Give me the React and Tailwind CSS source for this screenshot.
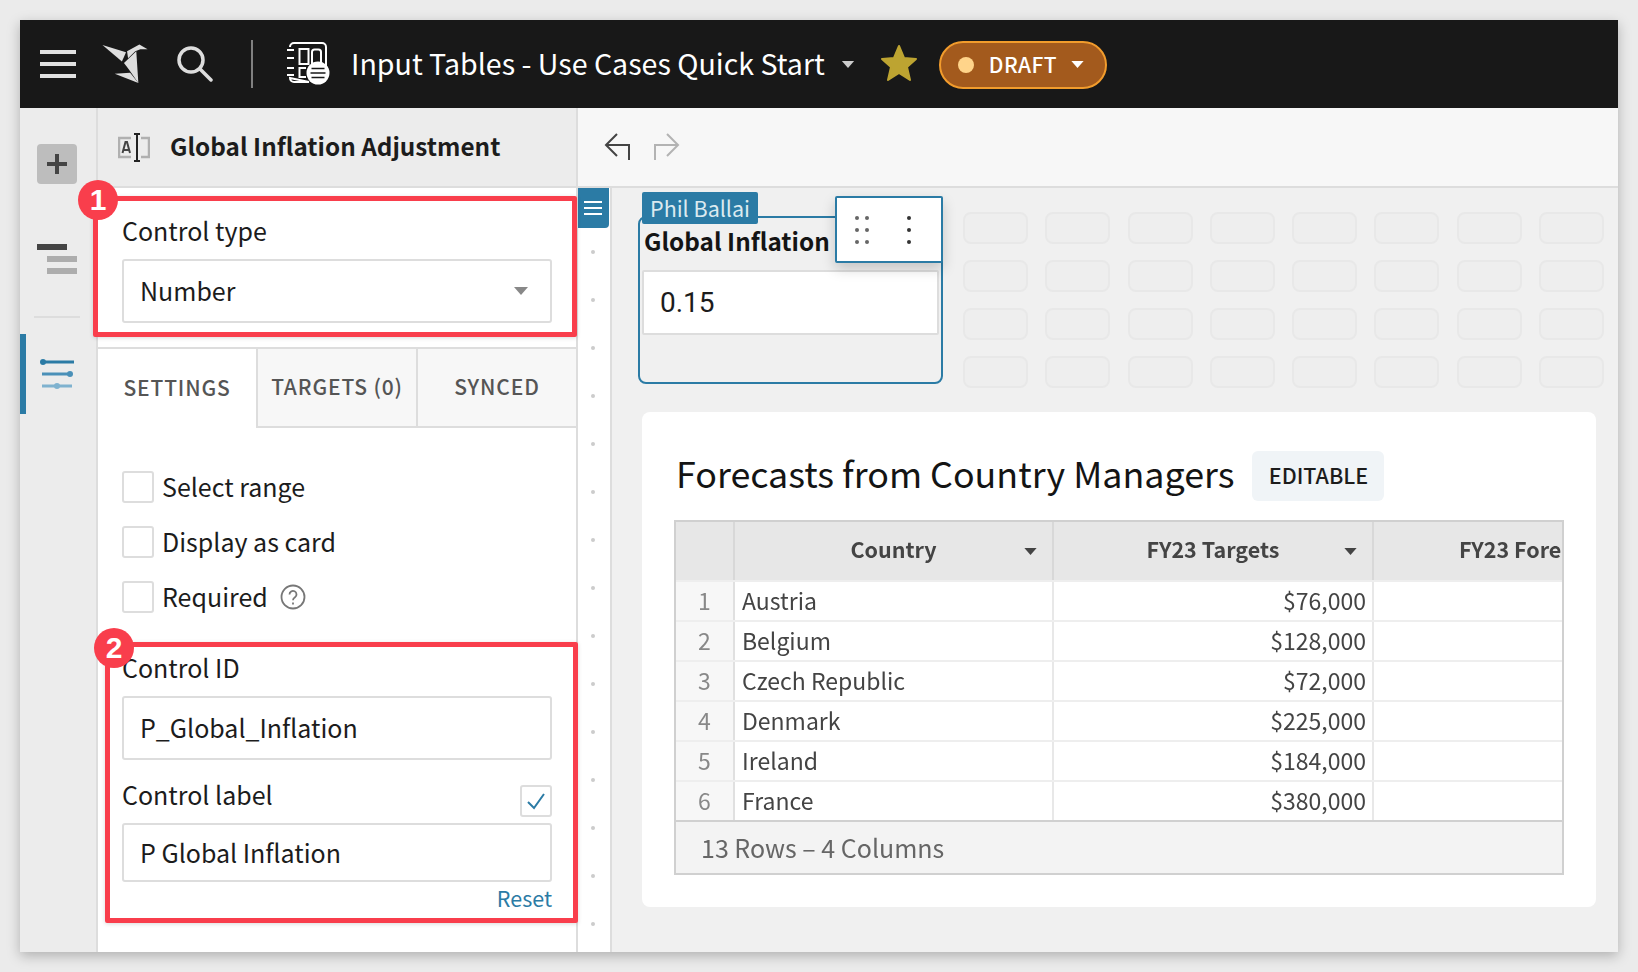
import React from 'react';

const rows = [
  ['1', 'Austria', '$76,000'],
  ['2', 'Belgium', '$128,000'],
  ['3', 'Czech Republic', '$72,000'],
  ['4', 'Denmark', '$225,000'],
  ['5', 'Ireland', '$184,000'],
  ['6', 'France', '$380,000'],
];

const Caret = ({ className }) => (
  <svg viewBox="0 0 14 8" className={className} fill="currentColor">
    <path d="M0 0h14L7 8z" />
  </svg>
);

const Logo = () => (
  <svg viewBox="0 0 44 39" className="w-[46px] h-[40px] ml-[26px]" fill="#dedede">
    <path d="M0 1l23 7-4 9z" />
    <path d="M21 18.500L33 7l2 31-9-13z" />
    <path d="M24 7l12-6.500L44 5h-7l-5 2-7 7z" />
    <path d="M12 29l15-1 8 10z" />
  </svg>
);

const WorkbookIcon = () => (
  <svg viewBox="0 0 44 44" className="w-[44px] h-[44px] ml-[34px]" fill="none" stroke="#fff" strokeWidth="2">
    <path d="M3 5a4 4 0 0 1 4-4h28a4 4 0 0 1 4 4v22M22 40H7a4 4 0 0 1-4-4z" />
    <path d="M0 8h7M0 16h7M0 26h7M0 33h7" />
    <rect x="12.500" y="7" width="9" height="15" />
    <path d="M25 22V10a2.500 2.500 0 0 1 2.500-2.500h4a2.500 2.500 0 0 1 2.500 2.500v12" />
    <path d="M19 26h-6.500v9H19" />
    <circle cx="31" cy="31" r="11.500" fill="#fff" stroke="none" />
    <path d="M24.500 26.500h13M23.500 31h15M24.500 35.500h13" stroke="#181818" strokeWidth="1.500" />
  </svg>
);

const Checkbox = ({ checked }) => (
  <div className="w-[32px] h-[32px] shrink-0 bg-white border-2 border-[#dddddd] rounded-[3px] flex items-center justify-center">
    {checked && (
      <svg viewBox="0 0 20 20" className="w-[20px] h-[20px]" fill="none" stroke="#2b7ba5" strokeWidth="2">
        <path d="M2 11l6 6L18 3" />
      </svg>
    )}
  </div>
);

const TextBox = ({ children, className }) => (
  <div className={`w-[430px] bg-white border-2 border-[#dddddd] rounded-[3px] pl-[16px] pb-[2px] flex items-center text-[25px] leading-[32px] text-[#1c1c1c] ${className}`}>
    {children}
  </div>
);

const Badge = ({ children, className }) => (
  <div className={`absolute z-20 w-[40px] h-[40px] rounded-full bg-[#f93e4c] text-white flex items-center justify-center font-['Liberation_Sans',sans-serif] text-[30px] font-bold leading-none ${className}`}>
    {children}
  </div>
);

const Tab = ({ children, className }) => (
  <div className={`h-full pb-[2px] flex items-center justify-center text-[21px] font-medium tracking-[0.04em] text-[#555555] ${className}`}>
    {children}
  </div>
);

const CheckRow = ({ label, help }) => (
  <div className="flex items-center h-[32px]">
    <Checkbox />
    <span className="ml-[8px] pb-[3px] text-[25px] leading-[32px] text-[#1c1c1c]">{label}</span>
    {help && (
      <svg viewBox="0 0 26 26" className="w-[26px] h-[26px] ml-[12px]" fill="none" stroke="#777777" strokeWidth="1.800">
        <circle cx="13" cy="13" r="11.500" />
        <path d="M9.500 10.500a3.500 3.500 0 1 1 5.500 2.800c-1.300.9-2 1.500-2 3" />
        <path d="M13 18.500v2" />
      </svg>
    )}
  </div>
);

const App = () => {
  return (
    <div className="w-[1638px] h-[972px] bg-[#ebebeb] pl-[20px] pt-[20px] font-['Noto_Sans_CJK_SC','Liberation_Sans',sans-serif] overflow-hidden">
      <div className="w-[1598px] h-[932px] flex flex-col shadow-[0_4px_12px_rgba(0,0,0,0.25)]">
        {/* top bar */}
        <div className="h-[88px] bg-[#181818] flex items-center pl-[20px] shrink-0">
          <div className="w-[36px] flex flex-col gap-[8px]">
            <div className="h-[4px] bg-[#e0e0e0]" />
            <div className="h-[4px] bg-[#e0e0e0]" />
            <div className="h-[4px] bg-[#e0e0e0]" />
          </div>
          <Logo />
          <svg viewBox="0 0 36 36" className="w-[36px] h-[36px] ml-[29px]" fill="none" stroke="#dddddd" strokeWidth="3.500" strokeLinecap="round">
            <circle cx="14" cy="14" r="12" />
            <path d="M23 23l11 11" />
          </svg>
          <div className="w-[2px] h-[48px] bg-[#808080] ml-[38px]" />
          <WorkbookIcon />
          <span className="ml-[20px] pb-[2px] text-[28.600px] leading-[40px] text-white whitespace-nowrap">Input Tables - Use Cases Quick Start</span>
          <Caret className="w-[14px] h-[7px] ml-[16px] text-[#cccccc]" />
          <svg viewBox="0 0 38 38" className="w-[38px] h-[38px] ml-[25px] -mt-[2px]" fill="#bda431" stroke="#bda431" strokeWidth="2" strokeLinejoin="round">
            <path d="M19 2l5 12 12 1-9 8 3 13-11-7-11 7 3-13-9-8 12-1z" />
          </svg>
          <div className="ml-[21px] mt-[1px] w-[168px] h-[48px] bg-[#a35a1d] border-2 border-[#f29c2c] rounded-full flex items-center pl-[17px]">
            <div className="w-[16px] h-[16px] rounded-full bg-[#ffd48a]" />
            <span className="ml-[15px] pb-[2px] text-[21px] leading-[28px] font-medium text-white tracking-[0.02em]">DRAFT</span>
            <Caret className="w-[13px] h-[7px] ml-[14px] text-white" />
          </div>
        </div>

        <div className="flex-1 flex min-h-0">
          {/* icon rail */}
          <div className="w-[78px] bg-[#ececec] border-r-2 border-[#dddddd] shrink-0 flex flex-col">
            <div className="w-[40px] h-[40px] mt-[36px] ml-[17px] rounded-[4px] bg-[#bdbdbd] flex items-center justify-center">
              <svg viewBox="0 0 20 20" className="w-[20px] h-[20px]" fill="#444444">
                <path d="M8 0h4v8h8v4h-8v8H8v-8H0V8h8z" />
              </svg>
            </div>
            <div className="mt-[60px] ml-[17px] w-[40px] flex flex-col gap-[6px]">
              <div className="w-[30px] h-[6px] bg-[#444444]" />
              <div className="w-[30px] h-[6px] bg-[#adadad] ml-[10px]" />
              <div className="w-[30px] h-[6px] bg-[#adadad] ml-[10px]" />
            </div>
            <div className="mt-[42px] ml-[14px] w-[46px] h-[2px] bg-[#dddddd]" />
            <div className="mt-[16px] h-[80px] flex">
              <div className="w-[6px] bg-[#2b7ba5]" />
              <svg viewBox="0 0 34 34" className="w-[34px] h-[34px] ml-[14px] mt-[23px]" strokeWidth="3">
                <path d="M2 5h32" stroke="#2b7ba5" />
                <circle cx="3" cy="5" r="3" fill="#2b7ba5" />
                <path d="M2 17h30" stroke="#4a90b8" />
                <circle cx="30" cy="17" r="3" fill="#4a90b8" />
                <path d="M2 29h30" stroke="#7fb2cf" />
                <circle cx="17" cy="29" r="3" fill="#7fb2cf" />
              </svg>
            </div>
          </div>

          {/* settings panel */}
          <div className="relative w-[480px] shrink-0 bg-white border-r-2 border-[#dddddd] flex flex-col">
            <div className="h-[80px] bg-[#ececec] border-b-2 border-[#dddddd] flex items-center pl-[20px] shrink-0">
              <svg viewBox="0 0 32 29" className="w-[32px] h-[29px]" fill="none">
                <path d="M13 5H1v19h12M23 5h8v19h-8" stroke="#b0b0b0" strokeWidth="2.500" />
                <path d="M4.500 20l3-11h1.500l3 11M5.500 17h5.500" stroke="#444444" strokeWidth="2" />
                <path d="M16 1h6M19 1v27M16 28h6" stroke="#222222" strokeWidth="2" />
              </svg>
              <span className="ml-[20px] pb-[2px] text-[24.300px] leading-[32px] font-semibold text-[#1c1c1c]">Global Inflation Adjustment</span>
            </div>

            <div className="h-[159px] pl-[24px] pt-[26px] shrink-0">
              <div className="text-[25px] leading-[32px] text-[#1c1c1c]">Control type</div>
              <TextBox className="h-[64px] mt-[13px] relative">
                Number
                <Caret className="absolute right-[22px] top-[26px] w-[14px] h-[8px] text-[#888888]" />
              </TextBox>
            </div>

            <div className="h-[81px] border-t-2 border-[#dddddd] flex shrink-0">
              <Tab className="w-[158px]">SETTINGS</Tab>
              <Tab className="w-[160px] bg-[#f7f7f7] border-l-2 border-b-2 border-[#dddddd]">TARGETS (0)</Tab>
              <Tab className="flex-1 bg-[#f7f7f7] border-l-2 border-b-2 border-[#dddddd]">SYNCED</Tab>
            </div>

            <div className="pl-[24px] pt-[43px] flex flex-col">
              <div className="flex flex-col gap-[23px]">
                <CheckRow label="Select range" />
                <CheckRow label="Display as card" />
                <CheckRow label="Required" help />
              </div>
              <div className="mt-[38px] text-[25px] leading-[32px] text-[#1c1c1c]">Control ID</div>
              <TextBox className="h-[64px] mt-[13px]">P_Global_Inflation</TextBox>
              <div className="w-[430px] mt-[25px] flex items-start justify-between">
                <span className="-mt-[7px] text-[25px] leading-[32px] text-[#1c1c1c]">Control label</span>
                <Checkbox checked />
              </div>
              <TextBox className="h-[59px] mt-[6px]">P Global Inflation</TextBox>
              <div className="w-[430px] mt-[4px] text-right text-[21.500px] leading-[24px] text-[#2b7ba5]">Reset</div>
            </div>

            {/* annotations */}
            <div className="absolute z-10 left-[-5px] top-[88px] w-[484px] h-[141px] border-[5px] border-[#f93e4c] rounded-[2px] shadow-[0_1px_4px_rgba(0,0,0,0.15)]" />
            <div className="absolute z-10 left-[7px] top-[534px] w-[473px] h-[281px] border-[5px] border-[#f93e4c] rounded-[2px] shadow-[0_1px_4px_rgba(0,0,0,0.15)]" />
            <Badge className="left-[-20px] top-[72px]">1</Badge>
            <Badge className="left-[-4px] top-[520px]">2</Badge>
          </div>

          {/* canvas */}
          <div className="flex-1 flex flex-col min-w-0">
            <div className="h-[80px] bg-[#f7f7f7] border-b-2 border-[#dddddd] flex items-center pl-[26px] gap-[24px] shrink-0">
              <svg viewBox="0 0 26 28" className="w-[26px] h-[28px]" fill="none" stroke="#444444" strokeWidth="2">
                <path d="M25 27V12H2M13 1L2 12l11 11" />
              </svg>
              <svg viewBox="0 0 26 28" className="w-[26px] h-[28px]" fill="none" stroke="#b3b3b3" strokeWidth="2">
                <path d="M1 27V12h23M13 1l11 11-11 11" />
              </svg>
            </div>

            <div className="flex-1 flex min-h-0">
              <div className="w-[34px] bg-white border-r-2 border-[#dddddd] flex flex-col items-center shrink-0">
                <div className="w-[32px] h-[40px] -ml-[2px] bg-[#2b7ba5] rounded-br-[4px] flex flex-col items-center justify-center gap-[4px]">
                  <div className="w-[18px] h-[2px] bg-white" />
                  <div className="w-[18px] h-[2px] bg-white" />
                  <div className="w-[18px] h-[2px] bg-white" />
                </div>
                <div className="mt-[22px] flex flex-col gap-[44px]">
                  {Array.from({ length: 15 }, (_, i) => (
                    <div key={i} className="w-[4px] h-[4px] -ml-[2px] rounded-full bg-[#cccccc]" />
                  ))}
                </div>
              </div>

              <div className="flex-1 bg-[#f0f0f0] pl-[30px] pt-[24px]">
                <div className="flex -ml-[4px]">
                  <div className="relative w-[305px] h-[168px] mt-[4px] border-2 border-[#2b7ba5] rounded-[8px] pl-[2px]">
                    <div className="absolute left-[2px] -top-[26px] w-[116px] h-[32px] bg-[#2b7ba5] rounded-[2px] text-[21.500px] leading-[32px] text-[#dbeaf0] text-center">Phil Ballai</div>
                    <div className="h-[52px] pt-[7px] pl-[2px] text-[24.300px] leading-[32px] font-semibold text-[#141414] whitespace-nowrap">Global Inflation</div>
                    <div className="w-[297px] h-[65px] bg-white border-2 border-[#dddddd] rounded-[2px] pl-[16px] flex items-center font-['Roboto',sans-serif] text-[28px] text-[#1c1c1c]">0.15</div>
                    <div className="absolute -right-[2px] -top-[22px] w-[108px] h-[67px] bg-white border-2 border-[#2b7ba5] rounded-[2px] shadow-[0_6px_14px_rgba(0,0,0,0.18)] flex items-center pl-[18px]">
                      <svg viewBox="0 0 14 28" className="w-[14px] h-[28px]" fill="#666666">
                        {[2, 14, 26].map((y) => (
                          <g key={y}>
                            <circle cx="2" cy={y} r="2" />
                            <circle cx="12" cy={y} r="2" />
                          </g>
                        ))}
                      </svg>
                      <svg viewBox="0 0 4 28" className="w-[4px] h-[28px] ml-[38px]" fill="#333333">
                        <circle cx="2" cy="2" r="2" />
                        <circle cx="2" cy="14" r="2" />
                        <circle cx="2" cy="26" r="2" />
                      </svg>
                    </div>
                  </div>
                  <div className="ml-[20px] grid grid-cols-8 gap-x-[17.300px] gap-y-[16px]">
                    {Array.from({ length: 32 }, (_, i) => (
                      <div key={i} className="w-[65px] h-[32px] bg-[#eeeeee] border-2 border-[#e8e8e8] rounded-[8px]" />
                    ))}
                  </div>
                </div>

                <div className="w-[954px] h-[495px] mt-[24px] bg-white rounded-[8px] pl-[32px] pt-[39px]">
                  <div className="flex items-center h-[50px]">
                    <span className="ml-[2px] -mt-[8px] text-[35.800px] leading-[50px] text-[#141414] whitespace-nowrap">Forecasts from Country Managers</span>
                    <span className="ml-[18px] w-[132px] h-[50px] bg-[#f0f4f7] rounded-[6px] pb-[2px] flex items-center justify-center text-[21.500px] font-medium text-[#1c1c1c]">EDITABLE</span>
                  </div>
                  <div className="w-[890px] h-[355px] mt-[19px] border-2 border-[#d0d0d0] overflow-hidden flex flex-col blur-[0.4px]">
                    <div className="h-[58px] shrink-0 bg-[#e7e7e7] grid grid-cols-[59px_319px_320px_1fr] text-[21.500px] font-semibold text-[#444444]">
                      <div className="border-r-2 border-[#d8d8d8]" />
                      <div className="relative border-r-2 border-[#d8d8d8] flex items-center justify-center pb-[3px]">
                        Country
                        <Caret className="absolute right-[15px] top-[26px] w-[13px] h-[7px] text-[#444444]" />
                      </div>
                      <div className="relative border-r-2 border-[#d8d8d8] flex items-center justify-center pb-[3px]">
                        FY23 Targets
                        <Caret className="absolute right-[15px] top-[26px] w-[13px] h-[7px] text-[#444444]" />
                      </div>
                      <div className="pl-[85px] pb-[3px] flex items-center whitespace-nowrap">FY23 Forecast</div>
                    </div>
                    {rows.map(([n, name, val]) => (
                      <div key={n} className="h-[40px] shrink-0 grid grid-cols-[59px_319px_320px_1fr] border-t-2 border-[#eeeeee] text-[23px] leading-[36px] text-[#444444]">
                        <div className="bg-[#f7f7f7] border-r-2 border-[#e0e0e0] text-center text-[#888888]">{n}</div>
                        <div className="bg-white border-r-2 border-[#e8e8e8] pl-[7px]">{name}</div>
                        <div className="bg-white border-r-2 border-[#e8e8e8] pr-[6px] text-right">{val}</div>
                        <div className="bg-white" />
                      </div>
                    ))}
                    <div className="flex-1 bg-[#f3f3f3] border-t-2 border-[#d0d0d0] pl-[25px] flex items-center text-[25px] text-[#666666]">13 Rows – 4 Columns</div>
                  </div>
                </div>
              </div>
            </div>
          </div>
        </div>
      </div>
    </div>
  );
};

export default App;
